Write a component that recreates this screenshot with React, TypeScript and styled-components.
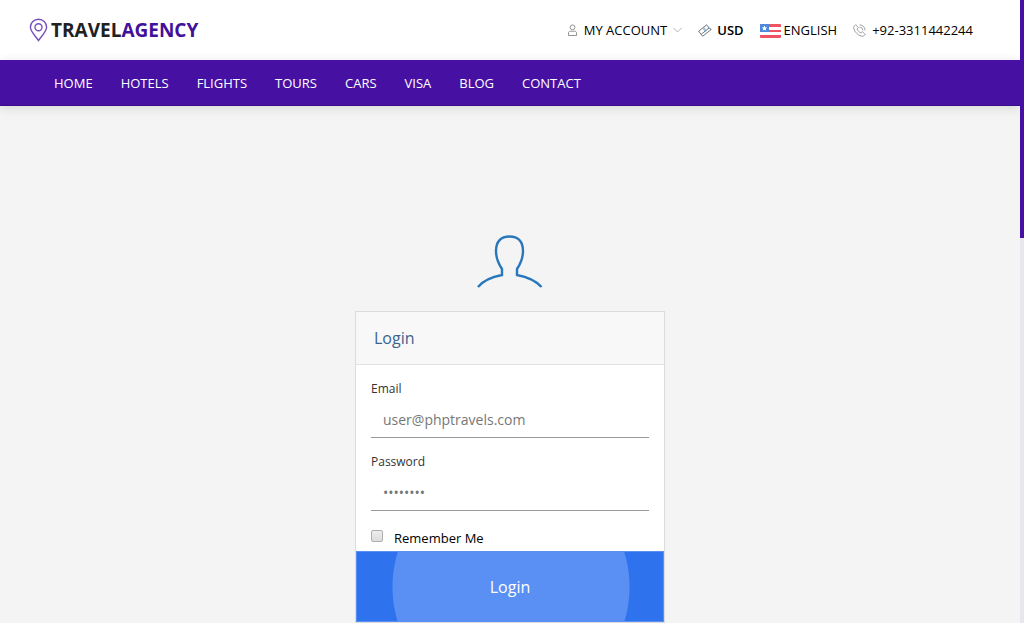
import React from "react";
import styled, { createGlobalStyle } from "styled-components";

const GlobalStyle = createGlobalStyle`
  *, *::before, *::after { box-sizing: border-box; }
  html, body, #root { min-height: 100vh; }
  body {
    margin: 0;
    background: #f4f4f4;
    color: #000;
    font-family: "Open Sans", "Noto Sans", sans-serif;
    font-size: 13px;
  }
  html { scrollbar-width: none; }
`;

const Shell = styled.div`
  display: flex;
  height: 100vh;
  overflow: hidden;
`;

const Page = styled.div`
  flex: 1;
  min-width: 0;
`;

const ScrollRail = styled.div`
  flex: none;
  width: 4px;
  background: #e8e7ec;
`;

const ScrollThumb = styled.div`
  height: 238px;
  background: #4610a3;
`;

const TopBar = styled.header`
  display: flex;
  align-items: center;
  justify-content: space-between;
  height: 60px;
  padding: 0 47px 0 29px;
  background: #fff;
`;

const Logo = styled.a`
  display: flex;
  align-items: center;
  gap: 3px;
  color: #212121;
  font-size: 19px;
  font-weight: 700;
  line-height: 24px;
  text-decoration: none;
`;

const LogoAccent = styled.span`
  color: #42109a;
`;

const TopLinks = styled.div`
  display: flex;
  align-items: center;
  gap: 16px;
`;

const TopLink = styled.a<{ $gap?: number; $strong?: boolean }>`
  display: flex;
  align-items: center;
  gap: ${(p) => p.$gap ?? 6}px;
  color: #000;
  font-size: 13px;
  font-weight: ${(p) => (p.$strong ? 600 : 400)};
  line-height: 20px;
  text-decoration: none;
`;

const Nav = styled.nav`
  display: flex;
  align-items: center;
  gap: 28px;
  height: 46px;
  padding: 0 54px;
  background: #4610a3;
  border-bottom: 1px solid #3b0d8c;
  box-shadow: 0 2px 10px rgba(0, 0, 0, 0.12);
`;

const NavLink = styled.a`
  color: #fff;
  font-size: 13px;
  line-height: 20px;
  text-decoration: none;
`;

const Main = styled.main`
  display: flex;
  flex-direction: column;
  align-items: center;
  padding-top: 128px;
`;

const Avatar = styled.svg`
  display: block;
  margin-bottom: 21px;
`;

const Card = styled.form`
  width: 310px;
  background: #fff;
  border: 1px solid #dcdcdc;
`;

const CardTitle = styled.h1`
  margin: 0;
  padding: 14px 18px;
  background: #f8f8f8;
  border-bottom: 1px solid #e2e2e2;
  color: #3d648f;
  font-size: 16px;
  font-weight: 400;
  line-height: 24px;
`;

const Fields = styled.div`
  padding: 14px 15px 0;
`;

const Field = styled.div`
  display: flex;
  flex-direction: column;
  margin-bottom: 14px;
`;

const Label = styled.label`
  color: #333;
  font-size: 12px;
  line-height: 20px;
`;

const Input = styled.input`
  height: 39px;
  padding: 3px 12px 0;
  background: transparent;
  border: 0;
  border-bottom: 1px solid #999;
  outline: 0;
  color: #555;
  font-family: inherit;
  font-size: 14px;
  font-weight: 400;
  &::placeholder { color: #777; opacity: 1; }
`;

const Remember = styled.label`
  display: flex;
  align-items: center;
  gap: 11px;
  height: 26px;
  color: #000;
  font-size: 13px;
  line-height: 20px;
`;

const Check = styled.input`
  appearance: none;
  width: 12px;
  height: 12px;
  margin: 0 0 4px;
  border: 1px solid #adadad;
  border-radius: 2px;
  background: linear-gradient(#eee, #dcdcdc);
`;

const Submit = styled.button`
  display: block;
  width: 100%;
  height: 71px;
  border: 1px solid #5a90f3;
  background: radial-gradient(circle at 154px 35px, #5a8ff3 118px, #2e72ee 119px);
  color: #fff;
  font-family: inherit;
  font-size: 16px;
  line-height: 24px;
`;

const navItems = ["HOME", "HOTELS", "FLIGHTS", "TOURS", "CARS", "VISA", "BLOG", "CONTACT"];

const PinIcon = () => (
  <svg width="19" height="24" viewBox="0 0 19 24" fill="none" stroke="#7650bb" strokeWidth="1.4">
    <path d="M9.5 22.500C6 17.4 1.4 13.4 1.4 9.300a8.1 8.1 0 0 1 16.2 0c0 4.100-4.600 8.100-8.100 13.200Z" />
    <circle cx="9.500" cy="9.200" r="3.500" />
  </svg>
);

const UserIcon = () => (
  <svg width="11" height="13" viewBox="0 0 11 13" fill="none" stroke="#888" strokeWidth="0.9">
    <circle cx="5.500" cy="3.300" r="2.400" />
    <path d="M1.500 11.500V8.900C1.500 7.800 2.200 7.200 3.500 7.200h4C8.800 7.200 9.500 7.800 9.500 8.900v2.600Z" />
  </svg>
);

const ChevronIcon = () => (
  <svg width="9" height="6" viewBox="0 0 9 6" fill="none" stroke="#aaa" strokeWidth="0.9">
    <path d="m.5 1 4 4 4-4" />
  </svg>
);

const MoneyIcon = () => (
  <svg width="14" height="13" viewBox="0 0 14 13" fill="none" stroke="#4a5560" strokeWidth="0.8">
    <path d="M.7 7.200 8.700.8l2.300 3.200-7.900 6.400Z" />
    <path d="m3.100 10.400 1.600 1.800 8.600-6.800L11 4" />
    <path d="M7.300 4.500c-1-.7-2.200.2-1.600 1 .6.700 1.500-.1 2 .6.400.8-.7 1.500-1.500.8" stroke="#3e83b8" />
  </svg>
);

const FlagIcon = () => (
  <svg width="21" height="15" viewBox="0 0 21 15">
    <rect width="21" height="15" rx="1" fill="#fff" />
    <path d="M1 1h19a1 1 0 0 1 1 1v2H0V2a1 1 0 0 1 1-1ZM0 7h21v2H0ZM0 12h21v2a1 1 0 0 1-1 1H1a1 1 0 0 1-1-1Z" fill="#f0525f" />
    <path d="M0 2a1 1 0 0 1 1-1h8v8H0Z" fill="#4a89dc" />
    <path d="m4.500 2.500.8 1.700 1.900.2-1.400 1.300.4 1.900-1.700-.9-1.700.9.400-1.900-1.400-1.300 1.900-.2Z" fill="#fff" />
  </svg>
);

const PhoneIcon = () => (
  <svg width="13" height="13" viewBox="0 0 13 13" fill="none" stroke="#888" strokeWidth="0.8">
    <path d="M.8 2.500 2.600.7l2.700 2.900-1.200 1.600c.6 1.500 2.100 3 3.700 3.700l1.600-1.200 2.900 2.700-1.800 1.800C6 13 0 7 .8 2.500Z" />
    <path d="M6.600.9c3.200 0 5.400 2.300 5.500 5.500M6.600 3.200c2 .1 3.100 1.200 3.200 3.200" />
  </svg>
);

export default function App() {
  return (
    <>
      <GlobalStyle />
      <Shell>
        <Page>
          <TopBar>
            <Logo href="#">
              <PinIcon />
              <span>TRAVEL<LogoAccent>AGENCY</LogoAccent></span>
            </Logo>
            <TopLinks>
              <TopLink href="#"><UserIcon />MY ACCOUNT<ChevronIcon /></TopLink>
              <TopLink href="#" $gap={5} $strong><MoneyIcon />USD</TopLink>
              <TopLink href="#" $gap={3}><FlagIcon />ENGLISH</TopLink>
              <TopLink href="tel:+923311442244"><PhoneIcon />+92-3311442244</TopLink>
            </TopLinks>
          </TopBar>
          <Nav>
            {navItems.map((item) => (
              <NavLink href="#" key={item}>{item}</NavLink>
            ))}
          </Nav>
          <Main>
            <Avatar width="66" height="56" viewBox="0 0 66 56" fill="none" stroke="#2877bd" strokeWidth="2.400">
              <path d="M1 53C6 47 14 43 25 41V35C21 29 19 23 19 17 19 7.500 24 2.500 32.500 2.500S46 7.500 46 17c0 6-2 12-6 18v6c11 2 19 6 24.500 12" />
            </Avatar>
            <Card onSubmit={(e) => e.preventDefault()}>
              <CardTitle>Login</CardTitle>
              <Fields>
                <Field>
                  <Label htmlFor="email">Email</Label>
                  <Input id="email" type="email" placeholder="user@phptravels.com" />
                </Field>
                <Field>
                  <Label htmlFor="password">Password</Label>
                  <Input id="password" type="password" placeholder="••••••••" />
                </Field>
                <Remember>
                  <Check type="checkbox" />
                  Remember Me
                </Remember>
              </Fields>
              <Submit type="submit">Login</Submit>
            </Card>
          </Main>
        </Page>
        <ScrollRail>
          <ScrollThumb />
        </ScrollRail>
      </Shell>
    </>
  );
}
